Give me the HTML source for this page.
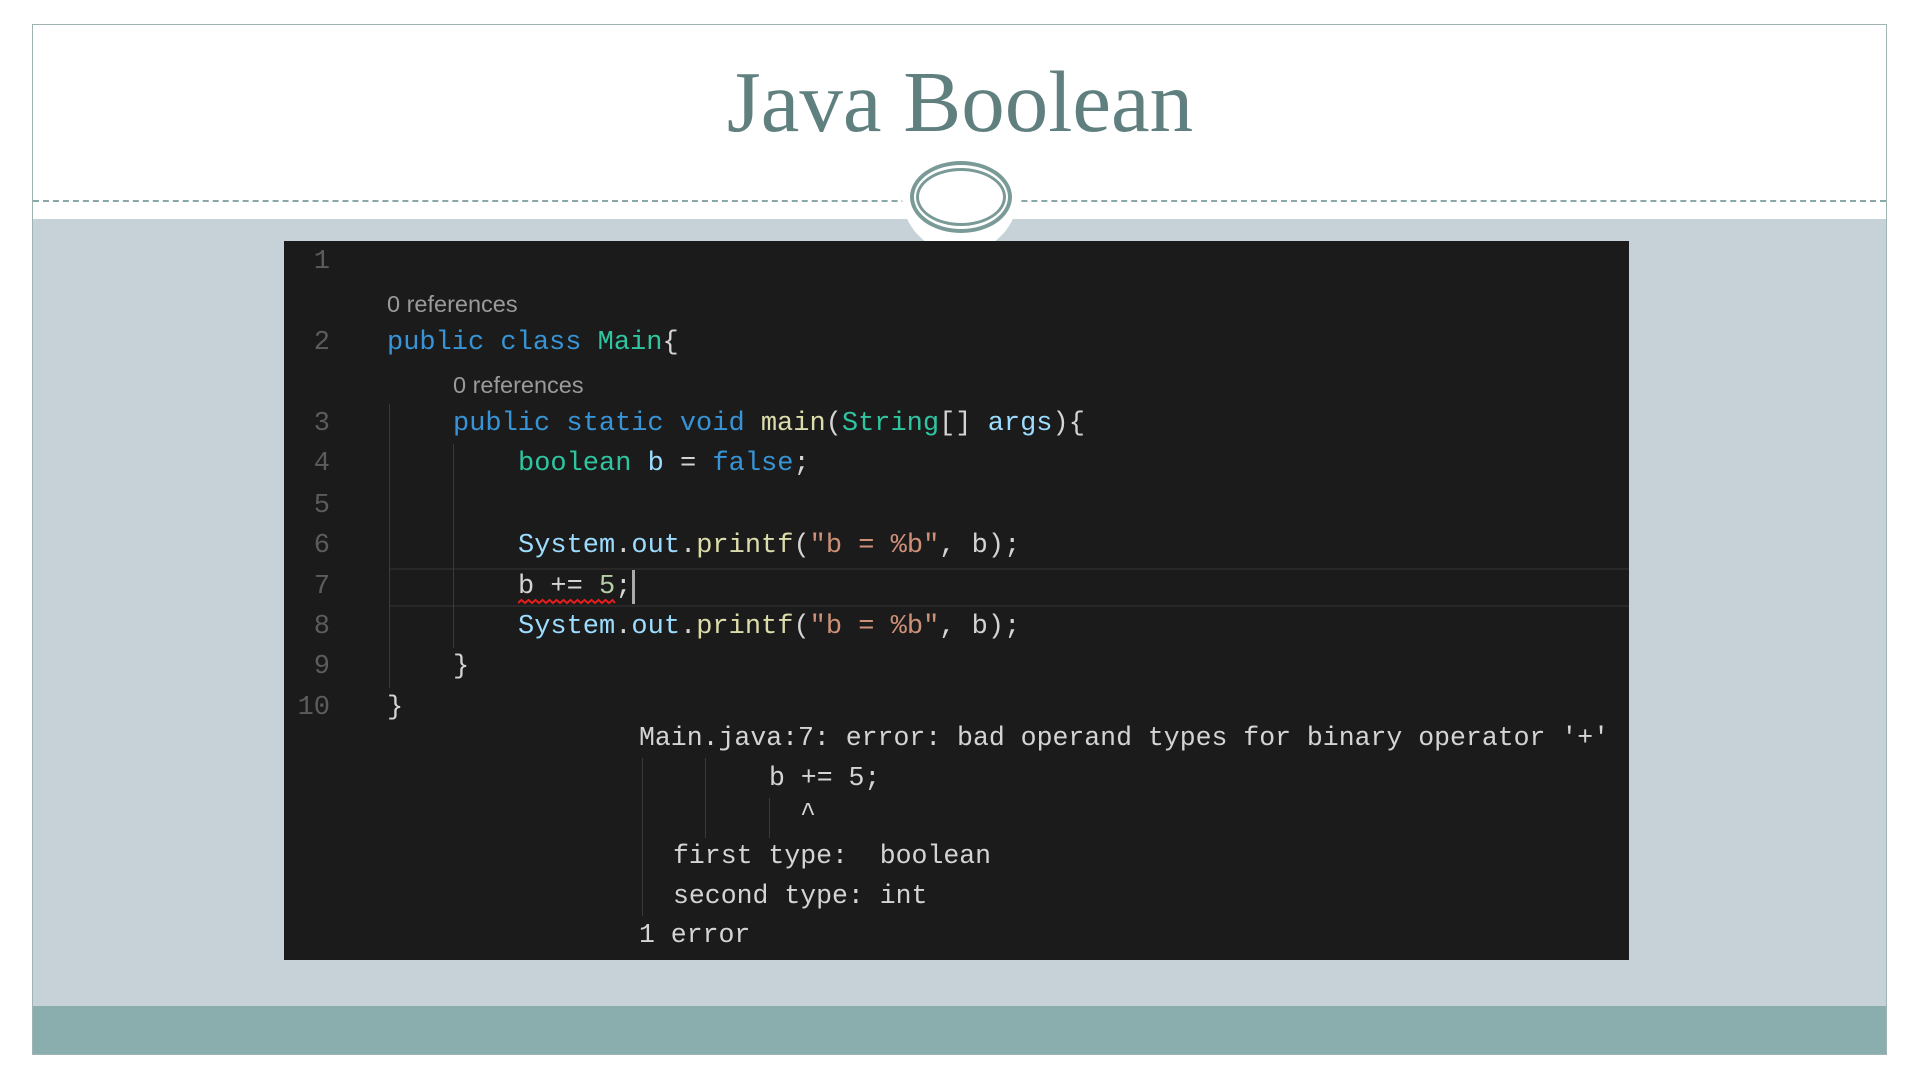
<!DOCTYPE html>
<html><head><meta charset="utf-8"><style>
*{margin:0;padding:0}
body{width:1920px;height:1080px;background:#fff;position:relative;overflow:hidden}
.a{position:absolute}
.m{font-family:"Liberation Mono",monospace;font-size:27px;line-height:40px;white-space:pre;color:#d4d4d4}
.e{font-size:26.5px}
.n{color:#5c5c5c;text-align:right;width:40px;left:290px}
.r{font-family:"Liberation Sans",sans-serif;font-size:23.5px;color:#9a9a9a;line-height:30px}
.k{color:#3794d6}.t{color:#2ec5a0}.f{color:#dcdcaa}.v{color:#9cdcfe}.s{color:#ce9178}.num{color:#b5cea8}
.g{position:absolute;width:1px;background:#3a3a3a}
</style></head><body>
<div class="a" style="left:32px;top:24px;width:1855px;height:1031px;border:1px solid #9fb3b3;box-sizing:border-box"></div>
<div class="a" style="left:33px;top:219px;width:1853px;height:787px;background:#c6d1d8"></div>
<div class="a" style="left:33px;top:1006px;width:1853px;height:48px;background:#8aadad"></div>
<div class="a" style="left:33px;top:200px;width:1853px;border-top:2px dashed #8aa8a8"></div>
<div class="a" style="left:902px;top:137px;width:116px;height:116px;border-radius:50%;background:#fff"></div>
<div class="a" style="left:910px;top:161px;width:94px;height:64px;border-radius:50%;border:4px solid #7a9a98;box-sizing:content-box"></div>
<div class="a" style="left:916px;top:168px;width:84px;height:52px;border-radius:50%;border:3px solid #7a9a98"></div>
<div class="a" style="left:0;width:1920px;top:52px;text-align:center;font-family:'Liberation Serif',serif;font-size:87px;line-height:100px;color:#607f7f">Java Boolean</div>

<div class="a" style="left:284px;top:241px;width:1345px;height:719px;background:#1b1b1b;overflow:hidden">
</div>
<div class="a" style="left:389px;top:568px;width:1240px;height:39px;border-top:2px solid #282828;border-bottom:2px solid #282828;box-sizing:border-box"></div>
<div class="g" style="left:389px;top:404px;height:284px"></div>
<div class="g" style="left:453px;top:444px;height:204px"></div>
<div class="g" style="left:642px;top:758px;height:158px"></div>
<div class="g" style="left:705px;top:758px;height:80px"></div>
<div class="g" style="left:769px;top:798px;height:40px"></div>

<div class="a m n" style="top:242px">1</div>
<div class="a m n" style="top:323px">2</div>
<div class="a m n" style="top:404px">3</div>
<div class="a m n" style="top:444px">4</div>
<div class="a m n" style="top:486px">5</div>
<div class="a m n" style="top:526px">6</div>
<div class="a m n" style="top:567px">7</div>
<div class="a m n" style="top:607px">8</div>
<div class="a m n" style="top:647px">9</div>
<div class="a m n" style="top:688px">10</div>

<div class="a r" style="left:387px;top:289px">0 references</div>
<div class="a m" style="left:387px;top:323px"><span class="k">public class</span> <span class="t">Main</span>{</div>
<div class="a r" style="left:453px;top:370px">0 references</div>
<div class="a m" style="left:453px;top:404px"><span class="k">public static void</span> <span class="f">main</span>(<span class="t">String</span>[] <span class="v">args</span>){</div>
<div class="a m" style="left:518px;top:444px"><span class="t">boolean</span> <span class="v">b</span> = <span class="k">false</span>;</div>
<div class="a m" style="left:518px;top:526px"><span class="v">System</span>.<span class="v">out</span>.<span class="f">printf</span>(<span class="s">"b = %b"</span>, b);</div>
<div class="a m" style="left:518px;top:567px">b += <span class="num">5</span>;</div>
<div class="a" style="left:632px;top:570px;width:3px;height:34px;background:#aaa"></div>
<svg class="a" style="left:518px;top:598px" width="100" height="8"><path d="M0 5 L3.5 2 L7 5 L10.5 2 L14 5 L17.5 2 L21 5 L24.5 2 L28 5 L31.5 2 L35 5 L38.5 2 L42 5 L45.5 2 L49 5 L52.5 2 L56 5 L59.5 2 L63 5 L66.5 2 L70 5 L73.5 2 L77 5 L80.5 2 L84 5 L87.5 2 L91 5 L94.5 2 L97 5" fill="none" stroke="#e51e1e" stroke-width="2"/></svg>
<div class="a m" style="left:518px;top:607px"><span class="v">System</span>.<span class="v">out</span>.<span class="f">printf</span>(<span class="s">"b = %b"</span>, b);</div>
<div class="a m" style="left:453px;top:647px">}</div>
<div class="a m" style="left:387px;top:688px">}</div>

<div class="a m e" style="left:639px;top:718px">Main.java:7: error: bad operand types for binary operator '+'</div>
<div class="a m e" style="left:769px;top:758px">b += 5;</div>
<div class="a m e" style="left:800px;top:794px">^</div>
<div class="a m e" style="left:673px;top:836px">first type:  boolean</div>
<div class="a m e" style="left:673px;top:876px">second type: int</div>
<div class="a m e" style="left:639px;top:915px">1 error</div>
</body></html>
